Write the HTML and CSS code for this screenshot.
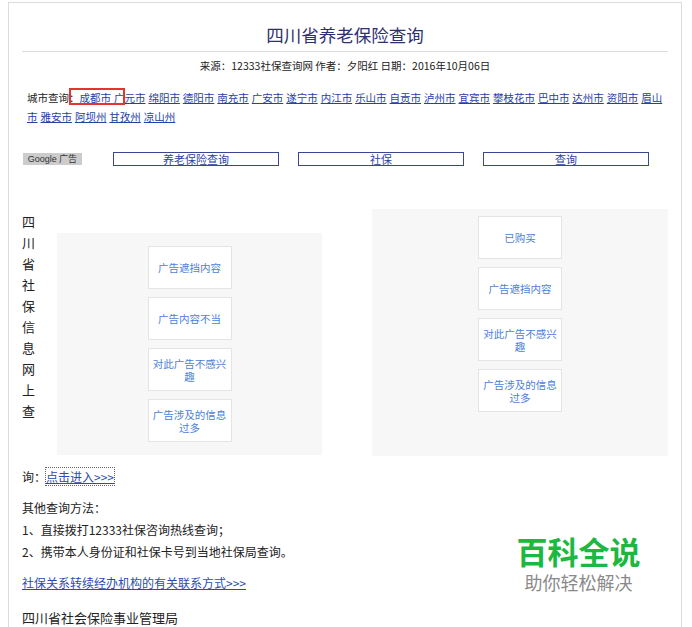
FILE: index.html
```html
<!DOCTYPE html>
<html lang="zh-CN">
<head>
    <meta charset="UTF-8">
    <meta name="viewport" content="width=device-width, initial-scale=1.0">
    <title>四川省养老保险查询</title>
    <link rel="stylesheet" href="styles.css">
</head>
<body>
    <div class="page">
        <!-- 标题 -->
        <h1 class="title">四川省养老保险查询</h1>
        <div class="meta">来源：12333社保查询网 作者：夕阳红 日期：2016年10月06日</div>

        <!-- 城市列表 -->
        <div class="cities"><span class="label">城市查询：</span><a href="#">成都市</a> <a href="#">广元市</a> <a href="#">绵阳市</a> <a href="#">德阳市</a> <a href="#">南充市</a> <a href="#">广安市</a> <a href="#">遂宁市</a> <a href="#">内江市</a> <a href="#">乐山市</a> <a href="#">自贡市</a> <a href="#">泸州市</a> <a href="#">宜宾市</a> <a href="#">攀枝花市</a> <a href="#">巴中市</a> <a href="#">达州市</a> <a href="#">资阳市</a> <a href="#">眉山市</a> <a href="#">雅安市</a> <a href="#">阿坝州</a> <a href="#">甘孜州</a> <a href="#">凉山州</a><span class="mark"></span></div>

        <!-- 广告链接 -->
        <div class="ad-links">
            <span class="google">Google 广告</span>
            <a href="#" class="ad-link">养老保险查询</a>
            <a href="#" class="ad-link">社保</a>
            <a href="#" class="ad-link">查询</a>
        </div>

        <div class="ads">
            <div class="vtext">四川省社保信息网上查</div>
            <div class="ad-box ad-left">
                <span class="ad-btn">广告遮挡内容</span>
                <span class="ad-btn">广告内容不当</span>
                <span class="ad-btn">对此广告不感兴趣</span>
                <span class="ad-btn">广告涉及的信息过多</span>
            </div>
            <div class="ad-box ad-right">
                <span class="ad-btn">已购买</span>
                <span class="ad-btn">广告遮挡内容</span>
                <span class="ad-btn">对此广告不感兴趣</span>
                <span class="ad-btn">广告涉及的信息过多</span>
            </div>
        </div>

        <p class="enter">询：<a href="#" class="focus">点击进入&gt;&gt;&gt;</a></p>

        <div class="other">
            其他查询方法：<br>
            1、直接拨打12333社保咨询热线查询；<br>
            2、携带本人身份证和社保卡号到当地社保局查询。
        </div>

        <p class="more"><a href="#">社保关系转续经办机构的有关联系方式&gt;&gt;&gt;</a></p>

        <p class="org">四川省社会保险事业管理局</p>
    </div>

    <!-- 水印 -->
    <div class="watermark">
        <div class="wm-title">百科全说</div>
        <div class="wm-sub">助你轻松解决</div>
    </div>
</body>
</html>
```

FILE: styles.css
```css
body {
    margin: 0;
    font-family: "Noto Sans CJK SC", sans-serif;
    color: #222;
    background: #fff;
}

.page {
    position: relative;
    margin: 2px 0 0 8px;
    width: 646px;
    padding: 0 13px;
    border: 1px solid #dcdcdc;
    border-bottom: none;
    min-height: 700px;
}

.title {
    margin: 20px 0 0;
    padding-bottom: 4px;
    border-bottom: 1px solid #dcdcdc;
    font-size: 17.5px;
    line-height: 24px;
    font-weight: normal;
    text-align: center;
    color: #2e3070;
}

.meta {
    margin-top: 6px;
    font-size: 10.5px;
    line-height: 16px;
    text-align: center;
    color: #222;
}

.cities {
    position: relative;
    margin-top: 14px;
    padding-left: 5px;
    font-size: 10.5px;
    line-height: 19px;
    word-spacing: 0.6px;
}

.cities a {
    color: #2540a8;
}

.mark {
    position: absolute;
    left: 47px;
    top: 0;
    width: 56px;
    height: 17px;
    box-sizing: border-box;
    border: 2px solid #e5332f;
}

.ad-links {
    display: flex;
    align-items: center;
    margin-top: 26px;
    height: 14px;
}

.google {
    margin-left: 1px;
    width: 59px;
    height: 12px;
    line-height: 12px;
    background: #cccccc;
    font-family: "Liberation Sans", sans-serif;
    font-size: 9px;
    color: #333;
    text-align: center;
}

.ad-link {
    box-sizing: border-box;
    width: 166px;
    height: 14px;
    margin-left: 19px;
    border: 1px solid #3a4790;
    line-height: 12px;
    font-size: 11px;
    text-align: center;
    color: #2b3f9f;
    text-decoration: none;
}

.ad-link:first-of-type {
    margin-left: 31px;
}

.ads {
    display: flex;
    align-items: flex-start;
    margin-top: 43px;
}

.vtext {
    width: 13px;
    margin-top: 2px;
    font-size: 13px;
    line-height: 21px;
}

.ad-box {
    display: flex;
    flex-direction: column;
    align-items: center;
    gap: 8px;
    box-sizing: border-box;
    background: #f7f7f7;
}

.ad-left {
    margin: 24px 0 0 22px;
    width: 265px;
    height: 222px;
    padding-top: 13px;
}

.ad-right {
    margin-left: auto;
    width: 296px;
    height: 247px;
    padding-top: 7px;
}

.ad-btn {
    display: flex;
    align-items: center;
    justify-content: center;
    box-sizing: border-box;
    width: 84px;
    height: 43px;
    border: 1px solid #e4e4e4;
    background: #fff;
    font-size: 10.5px;
    line-height: 13px;
    color: #4b7fd6;
    text-align: center;
}

.enter {
    margin: 11px 0 0;
    font-size: 12px;
    line-height: 20px;
}

.enter a {
    color: #2b4bb0;
    outline: 1px dotted #666;
}

.other {
    margin-top: 10px;
    font-size: 12px;
    line-height: 22px;
}

.more {
    margin: 10px 0 0;
    font-size: 12px;
    line-height: 20px;
}

.more a {
    color: #2b4bb0;
}

.org {
    margin: 15px 0 0;
    font-size: 13px;
    line-height: 20px;
}

.watermark {
    position: absolute;
    left: 508px;
    top: 535px;
    width: 141px;
    text-align: center;
}

.wm-title {
    font-size: 31px;
    line-height: 31px;
    font-weight: bold;
    color: #1db83f;
}

.wm-sub {
    margin-top: 7px;
    font-size: 18px;
    line-height: 18px;
    color: #8a8a8a;
}
```
